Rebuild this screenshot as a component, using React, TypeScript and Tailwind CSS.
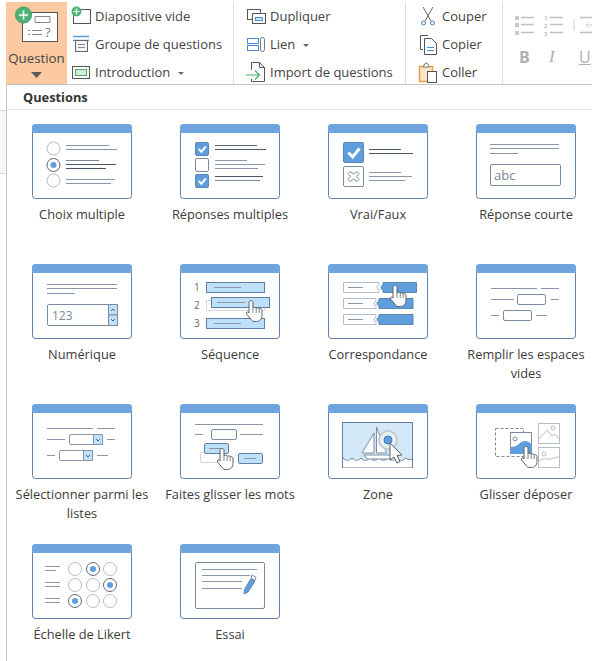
import React from "react";

const B = "#5f7fa8";
const H = "#6fa5de";
const L = "#8a97ab";
const D = "#4a586c";
const G = "#b5bdc9";
const F = "#5f9ddc";
const S = "#bfe0f9";

function Ln({ x1, x2, y, c = L }: { x1: number; x2: number; y: number; c?: string }) {
  return <line x1={x1} x2={x2} y1={y} y2={y} stroke={c} strokeWidth={1} />;
}

function Hand({ x, y }: { x: number; y: number }) {
  return (
    <g transform={`translate(${x} ${y})`}>
      <path
        d="M6 1.500c1.200 0 2 .8 2 2V9c.4-1 2.800-1 3.200.4.600-1 2.800-.8 3 .6.800-.6 2.800-.4 2.800 1.400v5c0 3.600-2.200 6.100-5.600 6.100H10c-2 0-3-.8-4-2.200L1.600 15c-.8-1.200.8-2.800 2-1.800L4 14V3.500c0-1.200.8-2 2-2z"
        fill="#fff"
        stroke="#5a5f68"
        strokeWidth={1}
      />
      <path d="M8 9v5M11.200 9.600V14M14.200 10.400V14" stroke="#5a5f68" strokeWidth={0.8} fill="none" />
    </g>
  );
}

function Radio({ x, y, on, c = G }: { x: number; y: number; on?: boolean; c?: string }) {
  return (
    <g>
      <circle cx={x} cy={y} r={6.5} fill="#fff" stroke={on ? "#5c6878" : c} strokeWidth={1} />
      {on && <circle cx={x} cy={y} r={3} fill={F} />}
    </g>
  );
}

function Check({ x, y, on, s = 13 }: { x: number; y: number; on?: boolean; s?: number }) {
  return (
    <g>
      <rect x={x} y={y} width={s} height={s} rx={1.5} fill={on ? F : "#fff"} stroke={on ? "#5b86b8" : "#7d8ba0"} />
      {on && (
        <path
          d={`M${x + s * 0.24} ${y + s * 0.5}l${s * 0.22} ${s * 0.22}l${s * 0.34} -${s * 0.42}`}
          fill="none"
          stroke="#fff"
          strokeWidth={s > 15 ? 3 : 2}
        />
      )}
    </g>
  );
}

function Tile({ x, y, w, h = 10, fill = S }: { x: number; y: number; w: number; h?: number; fill?: string }) {
  return <rect x={x + 0.5} y={y + 0.5} width={w} height={h} fill={fill} stroke={B} />;
}

function Dd({ x, y }: { x: number; y: number }) {
  return (
    <g>
      <rect x={x + 0.5} y={y + 0.5} width={33} height={10} rx={1.5} fill="#fff" stroke={L} />
      <rect x={x + 24.5} y={y + 0.5} width={9} height={10} fill={S} stroke={L} />
      <path d={`M${x + 27} ${y + 5}l2 2l2 -2`} stroke="#51617a" fill="none" />
    </g>
  );
}

function Card({ children }: { children?: React.ReactNode }) {
  return (
    <svg width={100} height={75} viewBox="0 0 100 75" className="block">
      <rect x={0.5} y={0.5} width={99} height={74} rx={3} fill="#fff" stroke={B} />
      <path d="M0.500 8.500V3.500a3 3 0 0 1 3 -3h93a3 3 0 0 1 3 3V8.500z" fill={H} stroke={H} />
      {children}
    </svg>
  );
}

const items: { label: string; art: React.ReactNode }[] = [
  {
    label: "Choix multiple",
    art: (
      <>
        <Radio x={21.5} y={24.5} />
        <Radio x={21.5} y={41} on />
        <Radio x={21.5} y={56.5} />
        <Ln x1={34} x2={77} y={21.5} />
        <Ln x1={34} x2={85} y={25.5} />
        <Ln x1={34} x2={67} y={36.5} c="#7a8494" />
        <Ln x1={34} x2={84} y={40.5} c={D} />
        <Ln x1={34} x2={74} y={44.5} c={D} />
        <Ln x1={34} x2={83} y={55.5} />
        <Ln x1={34} x2={79} y={59.5} />
      </>
    ),
  },
  {
    label: "Réponses multiples",
    art: (
      <>
        <Check x={15.5} y={18.5} on />
        <Check x={15.5} y={34.5} />
        <Check x={15.5} y={50.5} on />
        <Ln x1={35} x2={77} y={21.5} c="#5c6878" />
        <Ln x1={35} x2={86} y={25.5} c={D} />
        <Ln x1={35} x2={67} y={36.5} />
        <Ln x1={35} x2={85} y={40.5} />
        <Ln x1={35} x2={78} y={44.5} />
        <Ln x1={35} x2={83} y={52.5} c={D} />
        <Ln x1={35} x2={80} y={56.5} c="#7a8494" />
      </>
    ),
  },
  {
    label: "Vrai/Faux",
    art: (
      <>
        <Check x={15.5} y={18.5} on s={20} />
        <rect x={15.5} y={42.5} width={20} height={20} rx={1.5} fill="#fff" stroke="#7d8ba0" />
        <path
          d="M22 47.500l3.500 2.500l3.500 -2.500l2 2l-2.500 3l2.500 3l-2 2l-3.500 -2.500l-3.500 2.500l-2 -2l2.500 -3l-2.500 -3z"
          fill="#fff"
          stroke="#7d8ba0"
        />
        <Ln x1={41} x2={73} y={25.5} c={D} />
        <Ln x1={41} x2={85} y={29.5} c={D} />
        <Ln x1={41} x2={73} y={48.5} />
        <Ln x1={41} x2={84} y={52.5} />
        <Ln x1={41} x2={77} y={56.5} />
      </>
    ),
  },
  {
    label: "Réponse courte",
    art: (
      <>
        <Ln x1={14} x2={83} y={20.5} />
        <Ln x1={14} x2={83} y={24.5} />
        <Ln x1={14} x2={42} y={29.5} />
        <rect x={14.5} y={40.5} width={70} height={21} rx={1.5} fill="#fff" stroke="#7d8ba0" />
        <text x={18} y={56} fontSize={13} fill="#7d8794" fontFamily="'Open Sans', sans-serif">
          abc
        </text>
      </>
    ),
  },
  {
    label: "Numérique",
    art: (
      <>
        <Ln x1={15} x2={85} y={20.5} />
        <Ln x1={15} x2={85} y={24.5} />
        <Ln x1={15} x2={43} y={29.5} />
        <rect x={15.5} y={40.5} width={70} height={21} rx={1.5} fill="#fff" stroke="#7d8ba0" />
        <text x={20} y={56} fontSize={12} fill="#7d8794" fontFamily="'Open Sans', sans-serif">
          123
        </text>
        <rect x={76.5} y={40.5} width={9} height={10.5} fill={S} stroke="#7d8ba0" />
        <rect x={76.5} y={51} width={9} height={10.5} fill={S} stroke="#7d8ba0" />
        <path d="M79 47l2 -2l2 2M79 55l2 2l2 -2" stroke="#51617a" fill="none" />
      </>
    ),
  },
  {
    label: "Séquence",
    art: (
      <>
        <text x={14} y={27} fontSize={10} fill="#666" fontFamily="'Open Sans', sans-serif">
          1
        </text>
        <text x={14} y={45} fontSize={10} fill="#666" fontFamily="'Open Sans', sans-serif">
          2
        </text>
        <text x={14} y={63} fontSize={10} fill="#666" fontFamily="'Open Sans', sans-serif">
          3
        </text>
        <Tile x={26} y={18} w={58} />
        <Ln x1={34} x2={61} y={23.5} />
        <rect x={26.5} y={36.5} width={58} height={10} fill="#fff" stroke="#d4d8de" />
        <Tile x={31} y={33} w={58} />
        <Ln x1={37} x2={65} y={38.5} />
        <Tile x={26} y={54} w={58} />
        <Ln x1={34} x2={61} y={59.5} />
        <Hand x={65} y={35} />
      </>
    ),
  },
  {
    label: "Correspondance",
    art: (
      <>
        <path d="M15.500 18.500H51V21.500a2 2 0 0 0 0 4V28.500H15.500z" fill="#fff" stroke={G} />
        <Ln x1={20} x2={35} y={23.5} />
        <path d="M55 18.500H88.500V28.500H55V25.500a2 2 0 0 1 0 -4z" fill={F} stroke="#5b86b8" />
        <path d="M15.500 34.500H48V37.500a2 2 0 0 0 0 4V44.500H15.500z" fill="#fff" stroke={G} />
        <Ln x1={20} x2={35} y={39.5} />
        <path d="M51 34.500H85V44.500H51V41.500a2 2 0 0 1 0 -4z" fill={F} stroke="#5b86b8" />
        <path d="M15.500 50.500H48V53.500a2 2 0 0 0 0 4V60.500H15.500z" fill="#fff" stroke={G} />
        <Ln x1={20} x2={35} y={55.5} />
        <path d="M51 50.500H85V60.500H51V57.500a2 2 0 0 1 0 -4z" fill={F} stroke="#5b86b8" />
        <Hand x={61} y={20} />
      </>
    ),
  },
  {
    label: "Remplir les espaces vides",
    art: (
      <>
        <Ln x1={15} x2={61} y={24.5} />
        <Ln x1={65} x2={83} y={24.5} />
        <Ln x1={15} x2={38} y={35.5} />
        <rect x={41.5} y={30.5} width={28} height={10} rx={1.5} fill="#fff" stroke="#7d8ba0" />
        <Ln x1={75} x2={83} y={35.5} />
        <Ln x1={15} x2={23} y={51.5} />
        <rect x={27.5} y={46.5} width={28} height={10} rx={1.5} fill="#fff" stroke="#7d8ba0" />
        <Ln x1={60} x2={71} y={51.5} />
      </>
    ),
  },
  {
    label: "Sélectionner parmi les listes",
    art: (
      <>
        <Ln x1={15} x2={61} y={24.5} />
        <Ln x1={65} x2={83} y={24.5} />
        <Ln x1={15} x2={33} y={35.5} />
        <Dd x={37} y={30} />
        <Ln x1={75} x2={83} y={35.5} />
        <Ln x1={15} x2={23} y={51.5} />
        <Dd x={27} y={46} />
        <Ln x1={65} x2={76} y={51.5} />
      </>
    ),
  },
  {
    label: "Faites glisser les mots",
    art: (
      <>
        <Ln x1={15} x2={83} y={20.5} />
        <Ln x1={15} x2={23} y={30.5} />
        <rect x={31.5} y={25.5} width={25} height={10} rx={1.5} fill="#fff" stroke="#7d8ba0" />
        <Ln x1={60} x2={83} y={30.5} />
        <rect x={20.5} y={48.5} width={24} height={10} rx={1.5} fill="#fff" stroke="#d4d8de" />
        <rect x={24.5} y={39.5} width={24} height={10} rx={1.5} fill={S} stroke={B} />
        <Ln x1={29} x2={43} y={44.5} />
        <rect x={58.5} y={49.5} width={24} height={10} rx={1.5} fill={S} stroke={B} />
        <Ln x1={64} x2={76} y={54.5} />
        <Hand x={36} y={43} />
      </>
    ),
  },
  {
    label: "Zone",
    art: (
      <>
        <rect x={14.5} y={18.5} width={70} height={45} fill="#d3e8f7" stroke={B} />
        <path d="M15 55h69v8.500H15z" fill="#fff" />
        <path
          d="M15 54c3 3 6 3 9 0c3 3 6 3 9 0c3 3 6 3 9 0c3 3 6 3 9 0c3 3 6 3 9 0c3 3 6 3 9 0c3 3 6 3 9 0c2 2 4 2 6 1"
          fill="none"
          stroke="#6f7d90"
        />
        <path d="M46 29v20H34z" fill="#fff" stroke="#7d8ba0" />
        <path d="M48.500 23l10 26h-10z" fill="#fff" stroke="#7d8ba0" />
        <path d="M36 51h30l-3 4H39z" fill="#fff" stroke="#7d8ba0" />
        <circle cx={60} cy={36} r={9} fill="#e9eef3" stroke="#c2c9d2" strokeWidth={2} />
        <circle cx={60} cy={36} r={4} fill={F} stroke="#3f7cc0" />
        <path d="M62 39v17l4 -3l3 6l3 -1.500l-3 -6l5 -.5z" fill="#fff" stroke="#5a5f68" />
      </>
    ),
  },
  {
    label: "Glisser déposer",
    art: (
      <>
        <rect x={19.5} y={24.5} width={28} height={28} fill="#fff" stroke="#7d8ba0" strokeDasharray="3 2" />
        <rect x={34.5} y={28.5} width={21} height={21} fill="#fff" stroke="#7d8ba0" />
        <path d="M34.500 43c6 0 8 -3 11 -5s7 -1 10 2v10h-21z" fill={F} />
        <circle cx={39} cy={35} r={2} fill="#fff" stroke="#7d8ba0" />
        <rect x={62.5} y={19.5} width={21} height={20} fill="#fff" stroke={G} />
        <path d="M63 35l8 -9l5 6l3 -2l4 5" fill="none" stroke={G} />
        <circle cx={77} cy={24} r={2} fill="#fff" stroke={G} />
        <rect x={62.5} y={43.5} width={21} height={20} fill="#fff" stroke={G} />
        <path d="M63 57c6 -4 8 -1 12 -2s6 -2 8 -2" fill="none" stroke={G} />
        <circle cx={68} cy={50} r={2} fill="#fff" stroke={G} />
        <Hand x={44} y={41} />
      </>
    ),
  },
  {
    label: "Échelle de Likert",
    art: (
      <>
        <Ln x1={13} x2={28} y={22.5} />
        <Ln x1={13} x2={24} y={26.5} />
        <Ln x1={13} x2={28} y={38.5} />
        <Ln x1={13} x2={28} y={42.5} />
        <Ln x1={13} x2={28} y={54.5} />
        <Ln x1={13} x2={28} y={58.5} />
        <Radio x={43} y={25} />
        <Radio x={61} y={25} on />
        <Radio x={78} y={25} />
        <Radio x={43} y={41} />
        <Radio x={61} y={41} />
        <Radio x={78} y={41} on />
        <Radio x={43} y={57} on />
        <Radio x={61} y={57} />
        <Radio x={78} y={57} />
      </>
    ),
  },
  {
    label: "Essai",
    art: (
      <>
        <rect x={15.5} y={18.5} width={69} height={46} rx={1.5} fill="#fff" stroke="#7d8ba0" />
        <Ln x1={22} x2={77} y={25.5} />
        <Ln x1={22} x2={70} y={31.5} />
        <Ln x1={22} x2={62} y={37.5} />
        <Ln x1={22} x2={62} y={44.5} />
        <path d="M71 34.500l4 2.500l-7 11l-4 2l.5 -4.500z" fill={F} stroke="#5b86b8" />
        <path d="M72 31l4 2.500l-1 3l-4 -2.500z" fill="#fff" stroke="#7d8ba0" />
      </>
    ),
  },
];

function QuestionCell({ label, art }: { label: string; art: React.ReactNode }) {
  return (
    <div className="flex h-[140px] w-[148px] flex-col items-center pt-[14px]">
      <Card>{art}</Card>
      <div className="mt-[6px] w-[136px] text-center text-[12.8px] leading-[19px] text-[#3b3b3b]">{label}</div>
    </div>
  );
}

function Row({ icon, label, caret }: { icon: React.ReactNode; label: string; caret?: boolean }) {
  return (
    <div className="flex h-[28px] items-center whitespace-nowrap text-[13px] text-[#444]">
      <span className="mr-[4px] flex h-[22px] w-[20px] shrink-0 items-center justify-center">{icon}</span>
      <span className="pt-[2px]">{label}</span>
      {caret && <span className="ml-[8px] mt-[2px] h-0 w-0 border-x-[3px] border-t-[3px] border-x-transparent border-t-[#666]" />}
    </div>
  );
}

const Sep = () => <div className="mx-[7px] h-[82px] w-px shrink-0 bg-[#e0e0e0]" />;

export default function App() {
  return (
    <div className="h-[661px] w-[592px] overflow-hidden bg-white font-['Open_Sans','Noto_Sans',sans-serif]">
      <div className="flex h-[84px] items-start pt-[2px]">
        <div className="ml-[6px] flex h-[82px] w-[61px] shrink-0 flex-col items-center bg-[#fcc9a0]">
          <svg width={46} height={40} viewBox="0 0 46 40" className="mt-[4px]">
            <rect x={8.5} y={6.5} width={35} height={29} fill="#fff" stroke="#555" />
            <path d="M21 10.500h15v6h-15z" fill="none" stroke="#888" />
            <path d="M14 24.500h2M18 24.500h10M14 28.500h2M18 28.500h10" stroke="#888" fill="none" />
            <text x={31} y={31} fontSize={13} fill="#777" fontFamily="'Open Sans', sans-serif">
              ?
            </text>
            <circle cx={9.5} cy={9} r={8} fill="#4fb477" stroke="#3f9a63" />
            <path d="M9.500 4.500v9M5 9h9" stroke="#fff" strokeWidth={1.5} />
          </svg>
          <div className="mt-[3px] text-[13.3px] leading-[18px] text-[#444]">Question</div>
          <svg width={12} height={8} viewBox="0 0 12 8" className="mt-[4px]">
            <path d="M0 1h11l-5.500 6z" fill="#5a5a5a" />
          </svg>
        </div>
        <div className="ml-[4px] flex w-[155px] shrink-0 flex-col">
          <Row
            label="Diapositive vide"
            icon={
              <svg width={20} height={20} viewBox="0 0 20 20">
                <rect x={2.5} y={3.5} width={17} height={14} fill="#fff" stroke="#555" />
                <circle cx={5.5} cy={5.5} r={5} fill="#4fb477" />
                <path d="M5.500 2.500v6M2.500 5.500h6" stroke="#fff" strokeWidth={1.2} />
              </svg>
            }
          />
          <Row
            label="Groupe de questions"
            icon={
              <svg width={18} height={20} viewBox="0 0 18 20">
                <path d="M1 2.500h16M1 6.500h16" stroke="#5a9ad8" strokeWidth={1.5} />
                <rect x={3.5} y={6.5} width={12} height={11} fill="#f4f4f4" stroke="#666" />
                <path d="M6 10.500h7M6 13.500h7" stroke="#888" />
              </svg>
            }
          />
          <Row
            label="Introduction"
            caret
            icon={
              <svg width={20} height={16} viewBox="0 0 20 16">
                <rect x={1.5} y={2.5} width={17} height={12} fill="#fff" stroke="#555" />
                <rect x={4.5} y={5.5} width={11} height={6} fill="#d5ecd9" stroke="#4fa96f" />
              </svg>
            }
          />
        </div>
        <Sep />
        <div className="ml-[5px] flex w-[152px] shrink-0 flex-col">
          <Row
            label="Dupliquer"
            icon={
              <svg width={20} height={18} viewBox="0 0 20 18">
                <rect x={1.5} y={2.5} width={13} height={10} fill="#fff" stroke="#555" />
                <rect x={6.5} y={6.5} width={13} height={10} fill="#fff" stroke="#555" />
                <rect x={9.5} y={10.5} width={7} height={3} fill="#cfe3f7" stroke="#4a8fd6" />
              </svg>
            }
          />
          <Row
            label="Lien"
            caret
            icon={
              <svg width={20} height={18} viewBox="0 0 20 18">
                <rect x={1.5} y={3.5} width={11} height={5} fill="#fff" stroke="#4a8fd6" />
                <rect x={1.5} y={10.5} width={11} height={5} fill="#fff" stroke="#4a8fd6" />
                <rect x={14.5} y={2.5} width={4} height={14} rx={2} fill="none" stroke="#777" />
              </svg>
            }
          />
          <Row
            label="Import de questions"
            icon={
              <svg width={20} height={22} viewBox="0 0 20 22">
                <path d="M5.500 9V1.500h8l5 5v14h-13V18" fill="#fff" stroke="#555" />
                <path d="M13.500 1.500v5h5" fill="none" stroke="#555" />
                <path d="M0 14h13M9 9.500l4.500 4.500l-4.500 4.500" fill="none" stroke="#4fa96f" strokeWidth={1.2} />
              </svg>
            }
          />
        </div>
        <Sep />
        <div className="ml-[5px] flex w-[77px] shrink-0 flex-col">
          <Row
            label="Couper"
            icon={
              <svg width={16} height={20} viewBox="0 0 16 20">
                <path d="M3 1l8 14M13 1L5 15" stroke="#666" fill="none" />
                <circle cx={3.5} cy={17} r={2} fill="#fff" stroke="#3f7cc0" />
                <circle cx={12.5} cy={17} r={2} fill="#fff" stroke="#3f7cc0" />
              </svg>
            }
          />
          <Row
            label="Copier"
            icon={
              <svg width={20} height={22} viewBox="0 0 20 22">
                <path d="M10 2.500H2.500v14H5" fill="none" stroke="#555" />
                <path d="M6.500 5.500h7l5 5v11h-12z" fill="#fff" stroke="#555" />
                <path d="M9 14.500h7M9 17.500h7" stroke="#4a8fd6" />
              </svg>
            }
          />
          <Row
            label="Coller"
            icon={
              <svg width={20} height={22} viewBox="0 0 20 22">
                <rect x={1.5} y={5.5} width={13} height={15} fill="#fbe4c8" stroke="#e8a04a" strokeWidth={1.5} />
                <path d="M5 6l2.500 -4h1.500l2.500 4z" fill="#fff" stroke="#777" />
                <rect x={9.5} y={10.5} width={9} height={11} fill="#fff" stroke="#555" />
              </svg>
            }
          />
        </div>
        <Sep />
        <div className="ml-[5px] flex shrink-0 flex-col gap-[9px] pt-[10px]">
          <svg width={86} height={26} viewBox="0 0 86 26">
            <g fill="#c8c8c8">
              <rect x={0} y={4} width={4} height={4} />
              <rect x={0} y={11} width={4} height={4} />
              <rect x={0} y={19} width={4} height={4} />
            </g>
            <path
              d="M6 5.500h13M6 12.500h13M6 20.500h13M35 5.500h13M35 12.500h13M35 20.500h13M65 5.500h15M65 20.500h15"
              stroke="#c0c0c0"
              strokeWidth={1.5}
            />
            <path d="M59 7v12M71 13h9M71 13l3 -3M71 13l3 3" stroke="#d0d0d0" />
            <text x={29} y={8} fontSize={5.8} fontWeight={700} fill="#c0c0c0" fontFamily="'Open Sans', sans-serif">
              1
            </text>
            <text x={29} y={16} fontSize={5.8} fontWeight={700} fill="#c0c0c0" fontFamily="'Open Sans', sans-serif">
              2
            </text>
            <text x={29} y={24} fontSize={5.8} fontWeight={700} fill="#c0c0c0" fontFamily="'Open Sans', sans-serif">
              3
            </text>
          </svg>
          <div className="flex gap-[18px] pl-[4px] text-[16px] leading-[20px] text-[#b0b0b0]">
            <span className="w-[12px] font-bold">B</span>
            <span className="w-[12px] font-['Liberation_Serif',serif] text-[17px] italic">I</span>
            <span className="w-[12px] underline">U</span>
          </div>
        </div>
      </div>
      <div className="flex items-start">
        <div className="mt-[26px] h-[64px] w-[6px] shrink-0 border-y border-[#d8d8d8] bg-[#f7f7f7]" />
        <div className="w-[640px] shrink-0 border-l border-t border-[#c6c6c6]">
          <div className="flex h-[25px] items-center border-b border-[#e1e1e1] pl-[16px] pt-[2px] text-[12.8px] font-bold text-[#333]">
            Questions
          </div>
          <div className="grid w-[592px] grid-cols-[repeat(4,148px)] pl-[1px]">
            {items.map((i) => (
              <QuestionCell key={i.label} label={i.label} art={i.art} />
            ))}
          </div>
        </div>
      </div>
    </div>
  );
}
